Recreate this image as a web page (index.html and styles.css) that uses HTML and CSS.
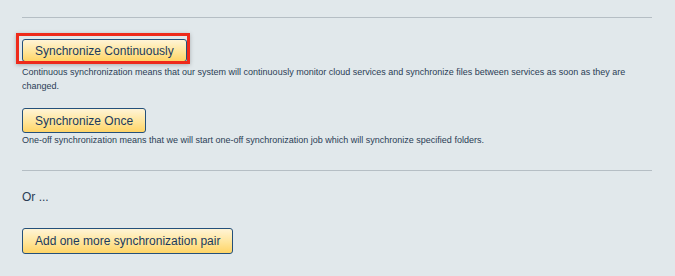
FILE: index.html
```html
<!DOCTYPE html>
<html>
<head>
<meta charset="utf-8">
<link rel="stylesheet" href="styles.css">
</head>
<body>
<div class="page">
  <div class="rule rule-top"></div>
  <div class="option option-first">
    <span class="highlight"><button class="btn btn-1">Synchronize Continuously</button></span>
    <p class="desc">Continuous synchronization means that our system will continuously monitor cloud services and synchronize files between services as soon as they are changed.</p>
  </div>
  <div class="option option-second">
    <button class="btn btn-2">Synchronize Once</button>
    <p class="desc">One-off synchronization means that we will start one-off synchronization job which will synchronize specified folders.</p>
  </div>
  <div class="rule rule-mid"></div>
  <p class="or">Or ...</p>
  <button class="btn btn-3">Add one more synchronization pair</button>
</div>
</body>
</html>
```
FILE: styles.css
```css
html, body {
  margin: 0;
  padding: 0;
  background: #e1e8eb;
}
body {
  font-family: "Liberation Sans", Arial, sans-serif;
  color: #2a3d55;
}
.page {
  width: 630px;
  padding-left: 22px;
  padding-top: 17px;
}
.rule {
  height: 0;
  border-top: 1px solid #b5bec4;
}
.option-first {
  margin-top: 21px;
}
.highlight {
  position: relative;
  display: inline-block;
  vertical-align: top;
}
.highlight::after {
  content: "";
  position: absolute;
  left: -6px;
  top: -6px;
  right: -3px;
  bottom: -2px;
  border: 3px solid #ee2a1a;
  box-shadow: 0 1px 4px rgba(0, 0, 0, 0.25);
  pointer-events: none;
}
.btn {
  display: inline-block;
  vertical-align: top;
  margin: 0;
  padding: 0 12px;
  border: 1px solid #24507a;
  border-radius: 3px;
  background: linear-gradient(to bottom, #fff4d6 0%, #ffe59a 55%, #ffd466 100%);
  font-family: "Liberation Sans", Arial, sans-serif;
  font-size: 12px;
  color: #1b3a5e;
  line-height: 1;
}
.btn-1 { height: 23px; }
.btn-2 { height: 25px; }
.btn-3 { height: 26px; }
.desc {
  margin: 3px 0 0;
  font-size: 9px;
  line-height: 14px;
  color: #2a3d55;
}
.option-second {
  margin-top: 15px;
}
.option-second .desc {
  margin-top: 0;
}
.rule-mid {
  margin-top: 23px;
}
.or {
  margin: 19px 0 0;
  font-size: 12px;
  line-height: 14px;
  color: #2a3d55;
}
.btn-3 {
  margin-top: 24px;
}
```
